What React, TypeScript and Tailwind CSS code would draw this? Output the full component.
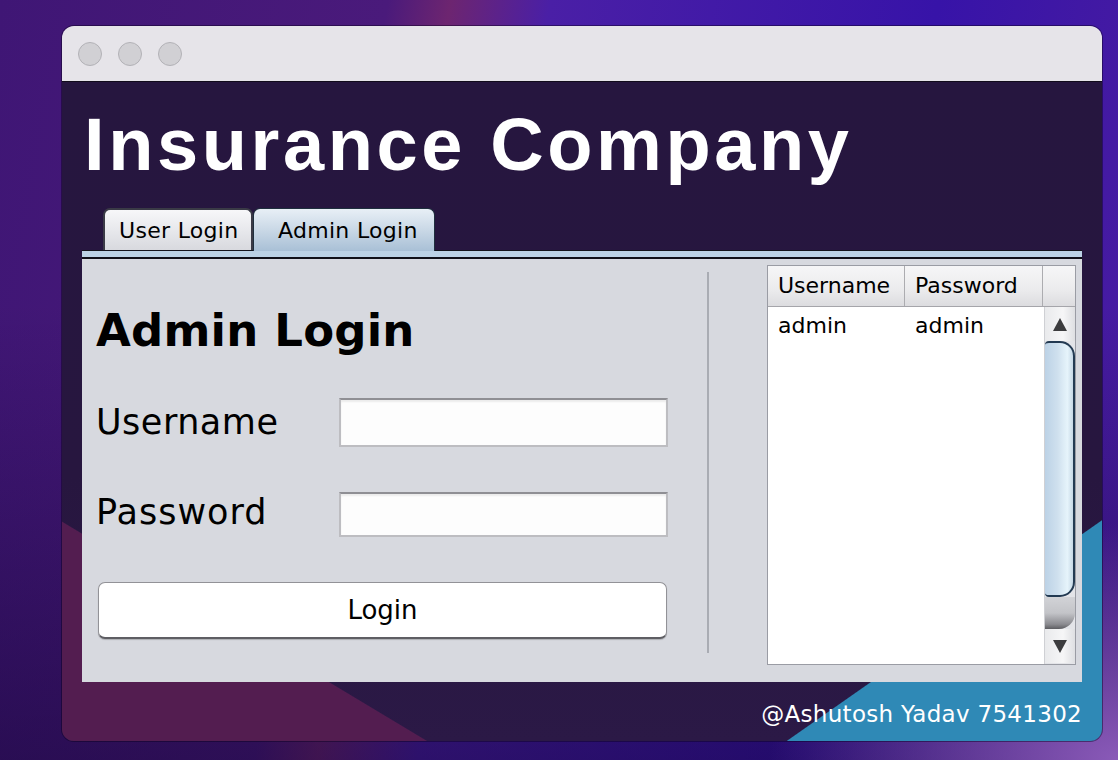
const sans = "font-['DejaVu_Sans','Noto_Sans',sans-serif]";

export default function App() {
  return (
    <div className="w-[1118px] h-[760px] overflow-hidden pt-[26px] pl-[62px] bg-[radial-gradient(ellipse_at_100%_100%,#8a5ab8_0%,transparent_22%),linear-gradient(180deg,transparent_40%,rgba(16,3,48,0.5)_100%),linear-gradient(100deg,#3f1675_0%,#4a1a7b_31%,#6d2570_36%,#4a1fa6_44%,#3713a8_75%,#4b1ea0_100%)]">
      <div className="w-[1040px] h-[715px] rounded-[12px] overflow-hidden flex flex-col shadow-[0_0_0_1px_rgba(10,0,30,0.45)]">
        <TitleBar />
        <div className="flex-1 flex flex-col px-[20px] bg-[linear-gradient(211deg,transparent_912px,#531d50_913px),linear-gradient(145deg,transparent_955px,#2f89b6_956px),linear-gradient(180deg,#26163f_0%,#27163f_60%,#2b1946_100%)]">
          <h1 className="mt-[23px] mb-[-1px] ml-[2px] text-[74px] leading-[80px] tracking-[3.6px] font-bold text-white font-['Liberation_Sans',Arial,sans-serif]">
            Insurance Company
          </h1>
          <Tabs />
          <div className="h-[9px] bg-[#bcd2e5] border-t border-t-[#14141c] border-b-2 border-b-[#101018]" />
          <div className="h-[423px] flex bg-[#d7d9df]">
            <LoginForm />
            <div className="w-[2px] h-[381px] mt-[13px] bg-[#a9acb3]" />
            <UsersTable />
          </div>
          <div className={`h-[59px] pt-[18px] text-right text-[23px] leading-[28px] tracking-[0.3px] text-white ${sans}`}>
            @Ashutosh Yadav 7541302
          </div>
        </div>
      </div>
    </div>
  );
}

function TitleBar() {
  return (
    <div className="h-[56px] shrink-0 flex items-center gap-[16px] pl-[16px] bg-[#e6e4e9] border-b border-b-[#120c1c]">
      {[0, 1, 2].map((i) => (
        <div key={i} className="w-[24px] h-[24px] rounded-full bg-[#d1d0d4] border border-[#b3b2b7]" />
      ))}
    </div>
  );
}

function Tabs() {
  return (
    <div className={`mt-[24px] ml-[21px] h-[42px] flex items-end text-[22px] tracking-[0.3px] text-black ${sans}`}>
      <div className="h-[42px] w-[150px] pl-[14px] flex items-center rounded-t-[7px] border-2 border-b-0 border-[#3a3a46] bg-[linear-gradient(180deg,#f7f7f9_0%,#e6e7eb_55%,#d8d9de_100%)]">
        User Login
      </div>
      <div className="relative z-10 mb-[-1px] h-[43px] w-[182px] pl-[24px] flex items-center rounded-t-[7px] border border-b-0 border-[#1f2f3e] bg-[linear-gradient(180deg,#e8eff6_0%,#c9d8e6_50%,#a9c0d6_100%)]">
        Admin Login
      </div>
    </div>
  );
}

function LoginForm() {
  return (
    <div className={`w-[625px] pl-[14px] flex flex-col text-black ${sans}`}>
      <h2 className="mt-[46px] text-[45px] leading-[52px] tracking-[0.2px] font-bold">Admin Login</h2>
      <div className="mt-[41px] flex items-start">
        <div className="w-[243px] mt-[4px] text-[35px] leading-[40px] tracking-[0.5px]">Username</div>
        <Field h="h-[49px]" />
      </div>
      <div className="mt-[45px] flex items-start">
        <div className="w-[243px] text-[35px] leading-[40px] tracking-[1px]">Password</div>
        <Field h="h-[45px]" />
      </div>
      <button className="mt-[45px] ml-[2px] w-[569px] h-[57px] rounded-[7px] bg-white border border-[#929297] border-b-2 border-b-[#5e5e63] text-[26px] shadow-[0_1px_1px_rgba(0,0,0,0.2)]">
        Login
      </button>
    </div>
  );
}

function Field({ h }: { h: string }) {
  return (
    <div
      className={`w-[329px] ${h} bg-[#fdfdfd] border-2 border-[#bdbdc1] border-t-[#8f8f94] shadow-[inset_0_2px_2px_rgba(0,0,0,0.07)]`}
    />
  );
}

function UsersTable() {
  return (
    <div className={`ml-[58px] mt-[6px] w-[309px] h-[400px] flex flex-col bg-white border border-[#9a9ca4] text-[22px] text-black ${sans}`}>
      <div className="h-[41px] flex border-b border-[#a5a5aa] bg-[linear-gradient(180deg,#f6f6f7_0%,#ebebed_60%,#dcdcdf_100%)]">
        <div className="w-[137px] pl-[10px] leading-[40px] border-r border-[#acacb0]">Username</div>
        <div className="w-[138px] pl-[10px] leading-[40px] border-r border-[#acacb0]">Password</div>
        <div className="flex-1" />
      </div>
      <div className="flex-1 flex">
        <div className="flex-1 flex items-start pt-[5px] leading-[28px]">
          <div className="w-[137px] pl-[10px]">admin</div>
          <div className="pl-[10px]">admin</div>
        </div>
        <Scrollbar />
      </div>
    </div>
  );
}

function Scrollbar() {
  return (
    <div className="w-[31px] flex flex-col border-l border-[#cfd0d4] bg-[#e3e4e8]">
      <div className="h-[34px] flex items-center justify-center bg-[linear-gradient(90deg,#e9eaec,#f6f6f7_60%,#dedfe2)]">
        <svg width="14" height="13" viewBox="0 0 14 13">
          <path d="M7 0 L14 13 L0 13 Z" fill="#3c3c3e" />
        </svg>
      </div>
      <div className="h-[256px] rounded-r-[15px] rounded-l-[4px] border-y-2 border-r-2 border-[#233a52] bg-[linear-gradient(90deg,#bcd2e6_0%,#cfe0ee_45%,#e6f4fb_80%,#c6d8e6_100%)]" />
      <div className="h-[32px] rounded-br-[16px] bg-[linear-gradient(180deg,#d2d3d7_0%,#c3c4c8_50%,#8b8b90_85%,#5d5d61_100%)]" />
      <div className="h-[34px] flex items-center justify-center bg-[linear-gradient(90deg,#e9eaec,#f6f6f7_60%,#dedfe2)]">
        <svg width="14" height="13" viewBox="0 0 14 13">
          <path d="M0 0 L14 0 L7 13 Z" fill="#3c3c3e" />
        </svg>
      </div>
    </div>
  );
}
